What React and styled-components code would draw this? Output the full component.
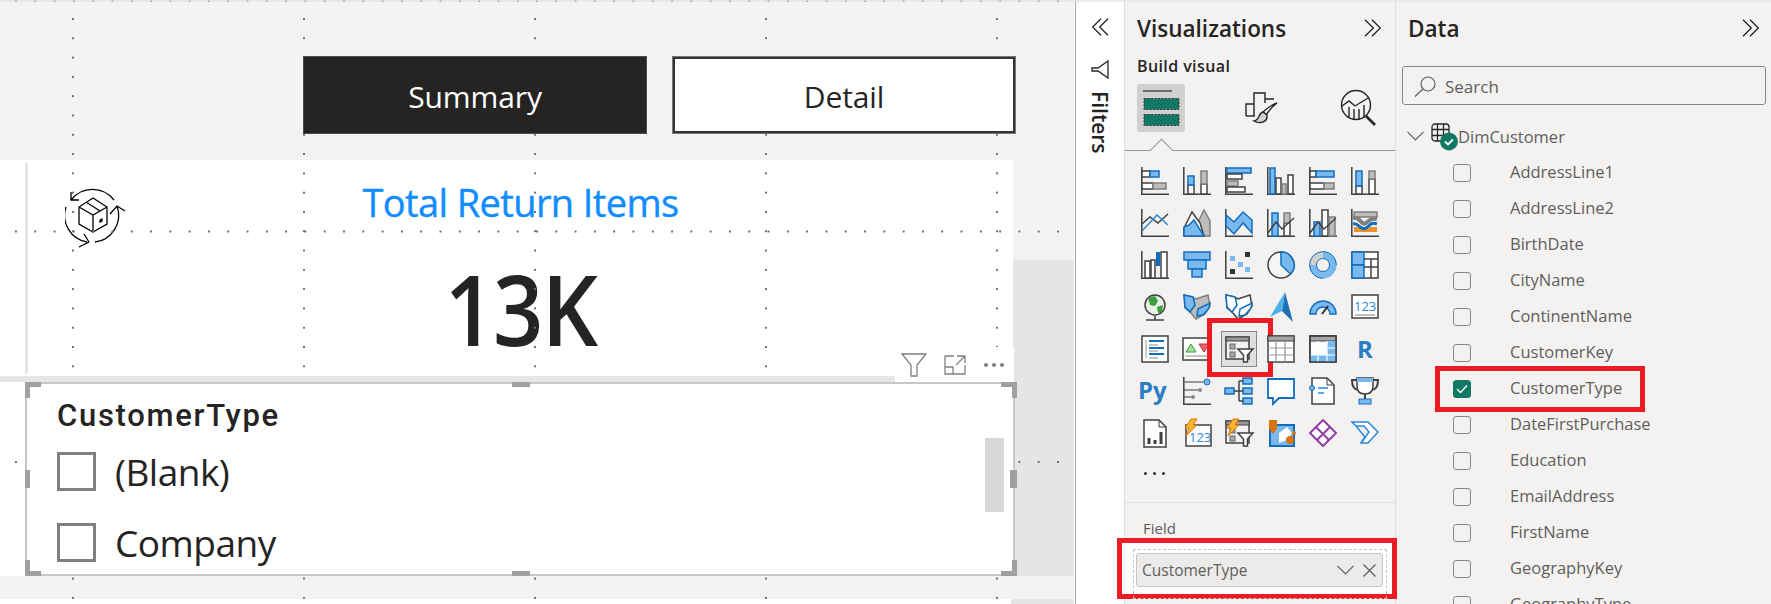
import React from "react";
import styled, { createGlobalStyle } from "styled-components";

const GlobalStyle = createGlobalStyle`
  html, body { margin: 0; padding: 0; overflow: hidden; background: #fff; }
  *, *::before, *::after { box-sizing: border-box; }
  body { font-family: "Open Sans", "Noto Sans", sans-serif; color: #252423; }
`;

const Page = styled.div`
  display: flex;
  width: 1771px;
  height: 604px;
  overflow: hidden;
  position: relative;
  &::after {
    content: "";
    position: absolute;
    inset: 0 0 auto 0;
    height: 3px;
    background: linear-gradient(#e4e4e4, transparent);
    pointer-events: none;
    z-index: 9;
  }
`;

/* report canvas */
const Canvas = styled.div`
  position: relative;
  width: 1075px;
  flex: none;
  background: #fff;
  border-right: 1px solid #fff;
`;

const Dots = styled.div`
  position: absolute;
  inset: 0;
  z-index: 1;
  pointer-events: none;
  background-image: radial-gradient(circle at 1px 1px, #6f6f6f 0.8px, transparent 1.1px),
    radial-gradient(circle at 1px 1px, #6f6f6f 0.8px, transparent 1.1px);
  background-size: 231px 19.3px, 19.3px 230.5px;
  background-position: 72px 18px, 15px 0px;
  width: 1074px;
`;

const TopBand = styled.div`
  height: 160px;
  width: 1074px;
  background: #f3f3f3;
  padding: 56px 0 0 303px;
  display: flex;
  gap: 25px;
  align-items: flex-start;
`;

const PageButton = styled.div`
  position: relative;
  z-index: 2;
  width: 344px;
  height: 78px;
  display: flex;
  align-items: center;
  justify-content: center;
  font-size: 30px;
  padding-top: 2px;
  letter-spacing: -0.1px;
  background: ${(p) => (p.$active ? "#252423" : "#fff")};
  color: ${(p) => (p.$active ? "#fff" : "#252423")};
  border: ${(p) => (p.$active ? "1px solid #4c4c4c" : "3px solid #333")};
  outline: ${(p) => (p.$active ? "none" : "1px solid #777")};
  outline-offset: -1px;
`;

const CanvasBody = styled.div`
  width: 1074px;
  height: 444px;
  background: linear-gradient(#f3f3f3 100px, #e5e5e5 100px);
`;

const Card = styled.div`
  width: 1013px;
  height: 216px;
  background: #fff;
  padding: 3px 0 2px 25px;
`;

const CardInner = styled.div`
  height: 211px;
  border-left: 3px solid #e6e6e6;
  display: grid;
  grid-template-columns: 1fr auto 1fr;
`;

const ReturnIcon = styled.svg`
  width: 62px;
  height: 62px;
  margin: 24px 0 0 37px;
`;

const CardValues = styled.div`
  display: flex;
  flex-direction: column;
  align-items: center;
`;

const CardTitle = styled.div`
  font-size: 38px;
  font-weight: 500;
  line-height: 50px;
  margin-top: 14px;
  color: #118dff;
  letter-spacing: -0.6px;
  -webkit-text-stroke: 0.4px #118dff;
  white-space: nowrap;
`;

const CardValue = styled.div`
  font-size: 98px;
  font-weight: 600;
  line-height: 120px;
  margin-top: 21px;
  letter-spacing: -2px;
  transform: scaleX(0.9);
  color: #252423;
`;

const SlicerRow = styled.div`
  margin-top: 6px;
  width: 1015px;
  height: 194px;
  background: #fff;
  padding-left: 25px;
`;

const Slicer = styled.div`
  position: relative;
  z-index: 2;
  height: 194px;
  background: #fff;
  border: 2px solid #c8c8c8;
  padding: 0 0 0 30px;
`;

const SlicerTitle = styled.div`
  font-family: Roboto, sans-serif;
  font-weight: 500;
  font-size: 31px;
  line-height: 36px;
  margin-top: 14px;
  margin-bottom: 18px;
  letter-spacing: 1.7px;
`;

const SlicerOption = styled.div`
  display: flex;
  align-items: center;
  gap: 19px;
  height: 39px;
  margin-bottom: 32px;
  font-size: 37px;
  letter-spacing: -0.5px;
  color: #252423;
`;

const SlicerBox = styled.span`
  width: 39px;
  height: 39px;
  flex: none;
  border: 3px solid #808080;
`;

const Scrollbar = styled.div`
  position: absolute;
  right: 9px;
  top: 54px;
  width: 19px;
  height: 74px;
  background: #d8d8d6;
`;

const Handle = styled.span`
  position: absolute;
  background: #a0a0a0;
  ${(p) => p.$pos}
`;

const Corner = styled.span`
  position: absolute;
  width: 16px;
  height: 16px;
  border-color: #a0a0a0;
  border-style: solid;
  border-width: 0;
  ${(p) => p.$pos}
`;

const VisualHeader = styled.div`
  position: absolute;
  right: -1px;
  top: -37px;
  width: 119px;
  height: 35px;
  background: #fff;
  display: flex;
  align-items: center;
  gap: 17px;
  padding: 0 0 0 6px;
`;

const BottomBand = styled.div`
  height: 23px;
  background: #f3f3f3;
`;

const BottomEdge = styled.div`
  height: 5px;
  width: 1011px;
  background: #fff;
`;

/* filters strip */
const FilterStrip = styled.div`
  width: 49px;
  flex: none;
  background: #fff;
  border-left: 1px solid #a8a8a8;
  display: flex;
  flex-direction: column;
  align-items: center;
  padding-top: 18px;
`;

const FilterIcon = styled.svg`
  margin-top: 24px;
`;

const FilterLabel = styled.div`
  writing-mode: vertical-rl;
  font-size: 21px;
  font-weight: 600;
  margin-top: 12px;
  line-height: 24px;
`;

/* visualizations pane */
const VizPane = styled.div`
  position: relative;
  z-index: 3;
  width: 272px;
  flex: none;
  background: #f3f2f1;
  border-left: 1px solid #e1dfdd;
  border-right: 1px solid #e1dfdd;
`;

const PaneHeader = styled.div`
  height: 56px;
  display: flex;
  align-items: center;
  justify-content: space-between;
  padding: 0 ${(p) => p.$right}px 0 ${(p) => p.$left}px;
`;

const PaneTitle = styled.div`
  font-size: 22.5px;
  font-weight: 600;
`;

const BuildLabel = styled.div`
  height: 20px;
  padding-left: 12px;
  font-size: 16px;
  font-weight: 600;
  line-height: 20px;
  letter-spacing: 0.4px;
`;

const TabRow = styled.div`
  position: relative;
  margin-top: 8px;
  height: 67px;
  border-bottom: 1px solid #979593;
  padding-left: 12px;
  display: flex;
  &::after {
    content: "";
    position: absolute;
    left: 28px;
    bottom: -9px;
    width: 17px;
    height: 17px;
    transform: rotate(45deg);
    background: #f3f2f1;
    border-top: 1px solid #979593;
    border-left: 1px solid #979593;
  }
`;

const Tab = styled.div`
  width: 48px;
  height: 48px;
  border-radius: 3px;
  background: ${(p) => (p.$active ? "#d2d0ce" : "transparent")};
  margin-right: ${(p) => p.$gap}px;
  display: flex;
  align-items: center;
  justify-content: center;
`;

const VizGrid = styled.div`
  display: grid;
  grid-template-columns: repeat(6, 42px);
  grid-auto-rows: 42px;
  margin: 9px 0 0 9px;
`;

const VizCell = styled.div`
  position: relative;
  display: flex;
  align-items: center;
  justify-content: center;
  ${(p) =>
    p.$active &&
    `
    &::before {
      content: "";
      position: absolute;
      inset: 3px;
      background: #e1dfdd;
      border: 1px solid #8a8886;
    }
    &::after {
      content: "";
      position: absolute;
      top: -10px;
      left: -11px;
      right: -13px;
      bottom: -7px;
      border: 5px solid #ed1c24;
    }
  `}
  svg {
    position: relative;
    display: block;
  }
`;

const MoreRow = styled.div`
  height: 48px;
  padding: 0 0 9px 19px;
  display: flex;
  align-items: center;
  gap: 4px;
`;

const MoreDot = styled.span`
  width: 3px;
  height: 3px;
  border-radius: 50%;
  background: #323130;
  margin-right: 2px;
`;

const FieldSection = styled.div`
  border-top: 1px solid #e1dfdd;
  height: 101px;
`;

const FieldLabel = styled.div`
  padding-left: 18px;
  font-size: 15px;
  line-height: 20px;
  margin-top: 15px;
  color: #605e5c;
`;

const FieldCallout = styled.div`
  margin: 0 0 0 -8px;
  width: 280px;
  height: 61px;
  background: #fff;
  border: 5px solid #ed1c24;
  padding: 6px 5px 0 11px;
  position: relative;
`;

const FieldWell = styled.div`
  height: 50px;
  border: 1px dashed #c8c6c4;
  padding: 3px 3px 0 2px;
`;

const FieldPill = styled.div`
  height: 34px;
  border: 1px solid #c8c6c4;
  border-radius: 3px;
  background: #edebe9;
  display: flex;
  align-items: center;
  padding: 0 6px 0 5px;
  font-size: 15.5px;
  color: #605e5c;
  justify-content: space-between;
`;

const PillActions = styled.span`
  display: flex;
  align-items: center;
  gap: 9px;
`;

/* data pane */
const DataPane = styled.div`
  flex: 1;
  background: #f3f2f1;
  height: 604px;
  overflow: hidden;
`;

const SearchBox = styled.div`
  margin: 10px 5px 0 6px;
  height: 39px;
  border: 1px solid #8a8886;
  border-radius: 3px;
  display: flex;
  align-items: center;
  gap: 9px;
  padding: 2px 0 0 11px;
  font-size: 17px;
  color: #605e5c;
`;

const TreeRoot = styled.div`
  margin-top: 14px;
  height: 36px;
  display: flex;
  align-items: center;
  padding: 0 0 2px 11px;
  font-size: 16.5px;
  color: #605e5c;
`;

const TableIconWrap = styled.span`
  position: relative;
  width: 27px;
  height: 28px;
  margin: 2px 0 0 7px;
  flex: none;
`;

const FieldRow = styled.div`
  position: relative;
  height: 36px;
  display: flex;
  align-items: center;
  padding-left: 57px;
  font-size: 16.5px;
  line-height: 34px;
  color: #605e5c;
  ${(p) =>
    p.$marked &&
    `
    &::after {
      content: "";
      position: absolute;
      left: 39px;
      top: -5px;
      width: 210px;
      height: 46px;
      border: 5px solid #ed1c24;
    }
  `}
`;

const FieldName = styled.span`
  margin-top: -2px;
`;

const FieldCheck = styled.span`
  width: 18px;
  height: 18px;
  flex: none;
  margin-right: 39px;
  border-radius: 3px;
  border: 1px solid ${(p) => (p.$checked ? "#117865" : "#8a8886")};
  background: ${(p) => (p.$checked ? "#117865" : "transparent")};
  display: flex;
  align-items: center;
  justify-content: center;
`;

const DoubleChevron = ({ left }) => (
  <svg width="18" height="18" viewBox="0 0 18 18" fill="none" stroke="#252423" strokeWidth="1.3">
    {left ? (
      <path d="M10 .7 1.7 9l8.3 8.3M17 .7 8.7 9l8.3 8.3" />
    ) : (
      <path d="M8 .7 16.3 9 8 17.3M1 .7 9.3 9 1 17.3" />
    )}
  </svg>
);

const C = {
  b: { fill: "#7ab9ee", stroke: "#106ebe" },
  g: { fill: "#bdbdbd", stroke: "#7f7f7f" },
  w: { fill: "#fff", stroke: "#404040" },
  l: { fill: "#fff", stroke: "#106ebe" },
};
const Bar = ({ k = "w", x, y, w, h }) => <rect x={x} y={y} width={w} height={h} strokeWidth="1.5" {...C[k]} />;
const Axes = () => <path d="M.8 0v27.2H28" fill="none" stroke="#404040" strokeWidth="1.5" />;
const Line = ({ p, c = "#404040", w = 1.5 }) => <polyline points={p} fill="none" stroke={c} strokeWidth={w} />;
const Poly = ({ k = "b", p }) => <polygon points={p} strokeWidth="1.5" {...C[k]} />;
const Label = ({ x, y, s, c = "#2b88d8", children, bold }) => (
  <text x={x} y={y} fontSize={s} fill={c} fontFamily="'Open Sans', sans-serif" fontWeight={bold ? 700 : 400}>
    {children}
  </text>
);
const SlicerGlyph = () => (
  <>
    <rect x="1" y="2" width="23" height="22" fill="#f3f2f1" stroke="#404040" strokeWidth="1.5" />
    <rect x="1" y="2" width="23" height="4" fill="#9a9a9a" stroke="#404040" strokeWidth="1" />
    <rect x="5" y="9" width="5" height="5" fill="#a8a8a8" stroke="#666" />
    <rect x="5" y="17" width="5" height="5" fill="#a8a8a8" stroke="#666" />
    <path d="M13 14h15l-5.500 6v7h-4v-7z" fill="#fff" stroke="#404040" strokeWidth="1.5" />
  </>
);
const Bolt = () => <path d="M8 0h6L10 6h4L3 17l3-8H2z" fill="#f7b731" stroke="#d9730d" strokeWidth="1" />;

const vizIcons = [
  <><Axes /><Bar x={1} y={4} w={8} h={6} /><Bar k="b" x={9} y={4} w={9} h={6} /><Bar x={1} y={16} w={11} h={6} /><Bar k="g" x={12} y={16} w={13} h={6} /></>,
  <><Axes /><Bar x={5} y={18} w={6} h={9} /><Bar k="b" x={5} y={9} w={6} h={9} /><Bar x={18} y={17} w={6} h={10} /><Bar k="g" x={18} y={4} w={6} h={13} /></>,
  <><Axes /><Bar k="b" x={2} y={1} w={24} h={5} /><Bar x={2} y={7} w={15} h={5} /><Bar k="g" x={2} y={14} w={11} h={5} /><Bar x={2} y={20} w={18} h={5} /></>,
  <><Axes /><Bar k="b" x={3} y={1} w={5} h={26} /><Bar x={9} y={11} w={5} h={16} /><Bar k="g" x={15} y={17} w={4} h={10} /><Bar x={21} y={8} w={5} h={19} /></>,
  <><Axes /><Bar x={1} y={4} w={6} h={6} /><Bar k="b" x={7} y={4} w={18} h={6} /><Bar x={1} y={16} w={14} h={6} /><Bar k="g" x={15} y={16} w={10} h={6} /></>,
  <><Axes /><Bar x={5} y={19} w={6} h={8} /><Bar k="b" x={5} y={4} w={6} h={15} /><Bar x={18} y={12} w={6} h={15} /><Bar k="g" x={18} y={4} w={6} h={8} /></>,

  <><Axes /><Line p="1,15 9,8 17,14 27,5" /><Line p="1,22 16,6 27,16" c="#2b88d8" /></>,
  <><Poly k="g" p="15,13 21,1 27,12 27,27 20,27" /><Poly k="w" p="1,19 9,3 17,14 21,27 1,27" /><Poly p="1,27 1,18 6,16 11,11 21,27" /></>,
  <><Axes /><Poly p="1,6 9,13 18,3 27,11 27,24 18,14 9,25 1,17" /></>,
  <><Axes /><Bar k="b" x={5} y={4} w={6} h={23} /><Bar x={17} y={14} w={6} h={13} /><Bar k="g" x={17} y={4} w={6} h={10} /><Line p="1,24 9,13 15,20 27,9" /></>,
  <><Axes /><Bar k="b" x={5} y={13} w={6} h={14} /><Bar x={13} y={1} w={6} h={26} /><Bar k="g" x={20} y={8} w={6} h={19} /><Line p="1,24 9,13 15,20 27,9" /></>,
  <><Axes /><Bar k="g" x={3} y={3} w={23} h={5} /><rect x="3" y="18" width="23" height="5" fill="#e8912d" /><path d="M2 10c6-5 8 8 13 4s6-5 11-4" fill="none" stroke="#7f7f7f" strokeWidth="4" /><path d="M2 15c6-2 8 8 13 4s6-6 11-4" fill="none" stroke="#106ebe" strokeWidth="3" /></>,

  <><Axes /><Bar x={4} y={10} w={5} h={17} /><Bar x={10} y={9} w={4} h={18} /><rect x="15" y="1" width="4" height="14" fill="#106ebe" /><Bar x={20} y={1} w={6} h={26} /></>,
  <><Bar k="b" x={1} y={1} w={26} h={8} /><Bar k="b" x={5} y={9} w={18} h={9} /><Bar k="b" x={9} y={18} w={10} h={8} /></>,
  <><Axes /><rect x="5" y="5" width="5" height="5" fill="#7ab9ee" /><rect x="20" y="1" width="5" height="5" fill="#333" /><rect x="13" y="11" width="5" height="5" fill="#7ab9ee" /><rect x="5" y="18" width="5" height="5" fill="#333" /><rect x="20" y="16" width="5" height="5" fill="#7ab9ee" /></>,
  <><circle cx="14" cy="14" r="13" fill="#f5f5f5" stroke="#404040" strokeWidth="1.5" /><path d="M14 14V1a13 13 0 0 1 9.500 22z" fill="#7ab9ee" stroke="#106ebe" strokeWidth="1.5" /></>,
  <><circle cx="14" cy="14" r="10" fill="none" stroke="#d0d0d0" strokeWidth="7" /><path d="M14 4a10 10 0 1 1-10 10" fill="none" stroke="#7ab9ee" strokeWidth="7" /><circle cx="14" cy="14" r="6.500" fill="none" stroke="#106ebe" /><circle cx="14" cy="14" r="13.400" fill="none" stroke="#106ebe" strokeDasharray="63 21" strokeDashoffset="-21" /></>,
  <><Bar x={1} y={1} w={26} h={26} /><Bar k="b" x={1} y={1} w={12} h={13} /><Bar k="b" x={1} y={14} w={12} h={13} /><path d="M13 8h14M20 8v19M13 16h14" stroke="#404040" strokeWidth="1.5" /></>,

  <><circle cx="14" cy="12" r="10" fill="#e8f2e4" stroke="#404040" strokeWidth="1.5" /><path d="M7 5l7-2 3 5-3 5-5-1zM16 14l6-2-1 7-4 1z" fill="#3b9e3f" /><path d="M5 27h18M14 23v4" stroke="#404040" strokeWidth="1.5" /></>,
  <><Poly k="g" p="1,2 9,4 13,6 25,2 27,13 22,21 13,26 8,20 2,15" /><Poly p="1,2 10,4 12,12 7,19 2,14" /><Poly p="15,16 27,10 26,15 20,22 14,23" /></>,
  <><Poly k="w" p="1,2 9,4 13,6 25,2 27,13 22,21 13,26 8,20 2,15" /><Poly k="l" p="1,2 10,4 12,12 7,19 2,14" /><Poly k="l" p="15,16 27,10 26,15 20,22 14,23" /></>,
  <><polygon points="18,-1 26,29 15,18" fill="#1f6fb5" /><polygon points="18,-1 3,24 15,18" fill="#4db3e6" /></>,
  <><path d="M1 21a13 13 0 0 1 26 0h-6a7 7 0 0 0-14 0z" fill="#7ab9ee" stroke="#106ebe" strokeWidth="1.5" /><path d="M13 21l6-8" stroke="#333" strokeWidth="2" /></>,
  <><Bar x={1} y={2} w={26} h={23} /><Label x={3} y={18} s={13}>123</Label><path d="M4 22h20" stroke="#7f7f7f" /></>,

  <><Bar x={1} y={1} w={26} h={26} /><path d="M5 5v18" stroke="#999" strokeWidth="1" /><path d="M8 6h15M8 13h15M8 19h15" stroke="#106ebe" strokeWidth="2" /><path d="M8 10h9M8 16h9M8 23h9" stroke="#888" /></>,
  <><Bar x={0} y={3} w={27} h={22} /><polygon points="8,9 13,17 3,17" fill="#a9d99e" stroke="#3b9e3f" /><polygon points="16,9 26,9 21,17" fill="#e8636c" stroke="#c4313b" /><path d="M2 21h24" stroke="#8a8886" /></>,
  <SlicerGlyph />,
  <><Bar x={1} y={1} w={26} h={26} /><rect x="1" y="1" width="26" height="5" fill="#a6a6a6" stroke="#404040" /><path d="M1 13h26M1 20h26M9 6v21M18 6v21" stroke="#9a9a9a" strokeWidth="1.2" /></>,
  <><Bar x={1} y={1} w={26} h={26} /><rect x="1" y="1" width="26" height="5" fill="#a6a6a6" stroke="#404040" /><rect x="18" y="6" width="9" height="21" fill="#7ab9ee" /><rect x="1" y="20" width="26" height="7" fill="#7ab9ee" /><path d="M1 13h26M1 20h26M9 6v21M18 6v21" stroke="#fff" strokeWidth="1.2" /><rect x="1" y="1" width="26" height="26" fill="none" stroke="#404040" strokeWidth="1.5" /></>,
  <Label x={6} y={23} s={24} c="#2a7fc1" bold>R</Label>,

  <Label x={-3} y={22} s={24} c="#2a7fc1" bold>Py</Label>,
  <><Axes /><circle cx="24" cy="5" r="3" fill="#7ab9ee" stroke="#106ebe" /><circle cx="17" cy="13" r="2" fill="#888" /><circle cx="10" cy="20" r="2" fill="#888" /><path d="M1 5h20M1 13h14M1 20h7" stroke="#404040" /></>,
  <><Bar k="b" x={0} y={11} w={9} h={6} /><Bar k="b" x={18} y={1} w={9} h={6} /><Bar k="b" x={18} y={11} w={9} h={6} /><Bar k="b" x={18} y={21} w={9} h={6} /><path d="M9 14h9M14 4v20M14 4h4M14 24h4" fill="none" stroke="#404040" strokeWidth="1.5" /></>,
  <path d="M1 2h26v19H12l-6 6v-6H1z" fill="#fff" stroke="#106ebe" strokeWidth="1.8" />,
  <><path d="M3 1h15l7 7v19H3z" fill="#fff" stroke="#404040" strokeWidth="1.5" /><path d="M18 1v7h7" fill="none" stroke="#404040" /><circle cx="3" cy="11" r="2.500" fill="#7ab9ee" stroke="#106ebe" /><path d="M9 11h10M9 16h6" stroke="#2b88d8" strokeWidth="1.5" /></>,
  <><path d="M6 3H1c0 7 3 10 7 10M22 3h5c0 7-3 10-7 10" fill="none" stroke="#404040" strokeWidth="2" /><path d="M6 1h16v8c0 6-3 8-8 8s-8-2-8-8z" fill="#fff" stroke="#404040" strokeWidth="1.5" /><rect x="6" y="1" width="16" height="4" fill="#7ab9ee" /><path d="M14 17v5" stroke="#404040" strokeWidth="2" /><rect x="8" y="22" width="12" height="5" fill="#7ab9ee" stroke="#106ebe" /></>,

  <><path d="M3 1h15l7 7v20H3z" fill="#fff" stroke="#404040" strokeWidth="1.5" /><path d="M18 1v7h7" fill="none" stroke="#404040" /><path d="M8 25v-6M14 25v-4M20 25V13" stroke="#404040" strokeWidth="3" /></>,
  <><Bar x={3} y={6} w={25} h={21} /><Label x={6} y={23} s={13}>123</Label><Bolt /></>,
  <><SlicerGlyph /><Bolt /></>,
  <><rect x="3" y="6" width="24" height="21" fill="#7ab9ee" stroke="#106ebe" strokeWidth="2" /><path d="M12 14l8-6 5 6-5 7-8 3z" fill="#fff" /><path d="M2 1h8v9l-4 5-4-5z" fill="#d9730d" /><circle cx="23" cy="21" r="4" fill="#d9730d" /><circle cx="27" cy="14" r="2" fill="#d9730d" /></>,
  <><path d="M14 1l13 13-13 13L1 14z" fill="#fff" stroke="#8f3fa8" strokeWidth="2" strokeLinejoin="round" /><path d="M7 8l13 13M21 8L8 21" stroke="#8f3fa8" strokeWidth="2" /></>,
  <><path d="M1 3h16l10 10-10 11H10l8-11-5-6H5z" fill="#fff" stroke="#2b88d8" strokeWidth="1.5" /><path d="M5 7l9 11-4 6" fill="none" stroke="#2b88d8" strokeWidth="1.5" /></>,
];

const fields = [
  "AddressLine1",
  "AddressLine2",
  "BirthDate",
  "CityName",
  "ContinentName",
  "CustomerKey",
  "CustomerType",
  "DateFirstPurchase",
  "Education",
  "EmailAddress",
  "FirstName",
  "GeographyKey",
  "GeographyType",
];

const App = () => {
  return (
    <Page>
      <GlobalStyle />
      <Canvas>
        <Dots />
        <TopBand>
          <PageButton $active>Summary</PageButton>
          <PageButton>Detail</PageButton>
        </TopBand>
        <CanvasBody>
          <Card>
            <CardInner>
              <ReturnIcon viewBox="0 0 62 62" fill="none" stroke="#000" strokeWidth="1.3">
                <path d="M6 13A27 27 0 0 1 49 13M6 5v8h8" />
                <path d="M52 19A27 27 0 0 1 30 55M45 27l7-8 8 5" />
                <path d="M1 20A27 27 0 0 0 22 55M14 60l10-5-5-8" />
                <path d="M28 11 42 20V37L28 45 14 37V20ZM14 20 28 28 42 20M28 28V45M21 15 35 24" />
                <path d="M35 33l2-1v2l-2 1z" fill="#000" />
              </ReturnIcon>
              <CardValues>
                <CardTitle>Total Return Items</CardTitle>
                <CardValue>13K</CardValue>
              </CardValues>
            </CardInner>
          </Card>
          <SlicerRow>
            <Slicer>
              <VisualHeader>
                <svg width="26" height="24" viewBox="0 0 26 24" fill="none" stroke="#808080" strokeWidth="1.3">
                  <path d="M1 1h24l-9 11v11h-6V12z" />
                </svg>
                <svg width="22" height="20" viewBox="0 0 22 20" fill="none" stroke="#808080" strokeWidth="1.3">
                  <path d="M10 1H1v18h20v-9M1 12h8v7M13 1h8v7M21 1 12 10" />
                </svg>
                <svg width="22" height="6" viewBox="0 0 22 6" fill="#808080">
                  <circle cx="3" cy="3" r="2" />
                  <circle cx="11" cy="3" r="2" />
                  <circle cx="19" cy="3" r="2" />
                </svg>
              </VisualHeader>
              <Corner $pos="left: -2px; top: -2px; border-width: 5px 0 0 5px;" />
              <Corner $pos="right: -4px; top: -2px; border-width: 5px 5px 0 0;" />
              <Corner $pos="left: -2px; bottom: -2px; border-width: 0 0 5px 5px;" />
              <Corner $pos="right: -4px; bottom: -2px; border-width: 0 5px 5px 0;" />
              <Handle $pos="left: 485px; top: -2px; width: 18px; height: 5px;" />
              <Handle $pos="left: 485px; bottom: -2px; width: 18px; height: 5px;" />
              <Handle $pos="left: -2px; top: 86px; width: 5px; height: 18px;" />
              <Handle $pos="right: -4px; top: 86px; width: 7px; height: 18px;" />
              <SlicerTitle>CustomerType</SlicerTitle>
              <SlicerOption>
                <SlicerBox />
                (Blank)
              </SlicerOption>
              <SlicerOption>
                <SlicerBox />
                Company
              </SlicerOption>
              <Scrollbar />
            </Slicer>
          </SlicerRow>
          <BottomBand />
          <BottomEdge />
        </CanvasBody>
      </Canvas>

      <FilterStrip>
        <DoubleChevron left />
        <FilterIcon width="18" height="19" viewBox="0 0 18 19" fill="none" stroke="#252423" strokeWidth="1.3">
          <path d="M17 1v17L7 11H1V8h6z" />
        </FilterIcon>
        <FilterLabel>Filters</FilterLabel>
      </FilterStrip>

      <VizPane>
        <PaneHeader $left={12} $right={13}>
          <PaneTitle>Visualizations</PaneTitle>
          <DoubleChevron />
        </PaneHeader>
        <BuildLabel>Build visual</BuildLabel>
        <TabRow>
          <Tab $active $gap={52}>
            <svg width="38" height="38" viewBox="0 0 38 38">
              <path d="M1 2h29" stroke="#333" strokeWidth="1.3" />
              <rect x="2" y="9.500" width="35" height="11" fill="#117865" stroke="#333" strokeDasharray="2 1.500" />
              <rect x="2" y="25.500" width="35" height="11" fill="#117865" stroke="#333" strokeDasharray="2 1.500" />
            </svg>
          </Tab>
          <Tab $gap={50}>
            <svg width="36" height="36" viewBox="0 0 36 36" fill="none" stroke="#252423" strokeWidth="1.4">
              <path d="M3 26V14h8M11 26V3h11v10M22 9h9" />
              <path d="M3 26h9" />
              <path d="M34 13c-4 3-9 9-11 12l-3-3c3-3 10-8 14-9z" />
              <path d="M20 22c-5 1-3 8-9 9 5 3 14 2 13-6z" fill="#d2d0ce" />
            </svg>
          </Tab>
          <Tab $gap={0}>
            <svg width="38" height="38" viewBox="0 0 38 38" fill="none" stroke="#252423" strokeWidth="1.4">
              <circle cx="16" cy="16" r="14.500" />
              <path d="M2 17l7-5 6 5 13-8" />
              <path d="M9 18v11M14 20v11M19 20v11M24 16v12" />
              <path d="M26 27l9 9" strokeWidth="2.600" />
            </svg>
          </Tab>
        </TabRow>
        <VizGrid>
          {vizIcons.map((icon, i) => (
            <VizCell key={i} $active={i === 26}>
              <svg width="28" height="28" viewBox="0 0 28 28" overflow="visible">
                {icon}
              </svg>
            </VizCell>
          ))}
        </VizGrid>
        <MoreRow>
          <MoreDot />
          <MoreDot />
          <MoreDot />
        </MoreRow>
        <FieldSection>
          <FieldLabel>Field</FieldLabel>
          <FieldCallout>
            <FieldWell>
              <FieldPill>
                CustomerType
                <PillActions>
                  <svg width="17" height="10" viewBox="0 0 17 10" fill="none" stroke="#605e5c" strokeWidth="1.2">
                    <path d="M.5.8 8.500 9l8-8.200" />
                  </svg>
                  <svg width="13" height="13" viewBox="0 0 13 13" fill="none" stroke="#605e5c" strokeWidth="1.2">
                    <path d="M.5.500 12.500 12.500M12.500.500.500 12.500" />
                  </svg>
                </PillActions>
              </FieldPill>
            </FieldWell>
          </FieldCallout>
        </FieldSection>
      </VizPane>

      <DataPane>
        <PaneHeader $left={12} $right={11}>
          <PaneTitle>Data</PaneTitle>
          <DoubleChevron />
        </PaneHeader>
        <SearchBox>
          <svg width="22" height="21" viewBox="0 0 22 21" fill="none" stroke="#605e5c" strokeWidth="1.2">
            <circle cx="14" cy="8" r="7" />
            <path d="M9 13 1 20.500" />
          </svg>
          Search
        </SearchBox>
        <TreeRoot>
          <svg width="17" height="10" viewBox="0 0 17 10" fill="none" stroke="#605e5c" strokeWidth="1.1">
            <path d="M.5.800 8.500 9l8-8.200" />
          </svg>
          <TableIconWrap>
            <svg width="27" height="28" viewBox="0 0 27 28" fill="none" stroke="#252423" strokeWidth="1.3">
              <rect x="1" y="1" width="17" height="17" rx="3" />
              <path d="M6.500 1v17M12.500 1v17M1 6.500h17M1 12.500h17" />
              <circle cx="18" cy="18.500" r="9" fill="#117865" stroke="none" />
              <path d="M14 18.500l3 3 5-5" stroke="#fff" strokeWidth="1.8" />
            </svg>
          </TableIconWrap>
          DimCustomer
        </TreeRoot>
        {fields.map((name) => (
          <FieldRow key={name} $marked={name === "CustomerType"}>
            <FieldCheck $checked={name === "CustomerType"}>
              {name === "CustomerType" && (
                <svg width="12" height="10" viewBox="0 0 12 10" fill="none" stroke="#fff" strokeWidth="1.3">
                  <path d="M1 5l3.500 3.500L11 1.500" />
                </svg>
              )}
            </FieldCheck>
            <FieldName>{name}</FieldName>
          </FieldRow>
        ))}
      </DataPane>
    </Page>
  );
};

export default App;
